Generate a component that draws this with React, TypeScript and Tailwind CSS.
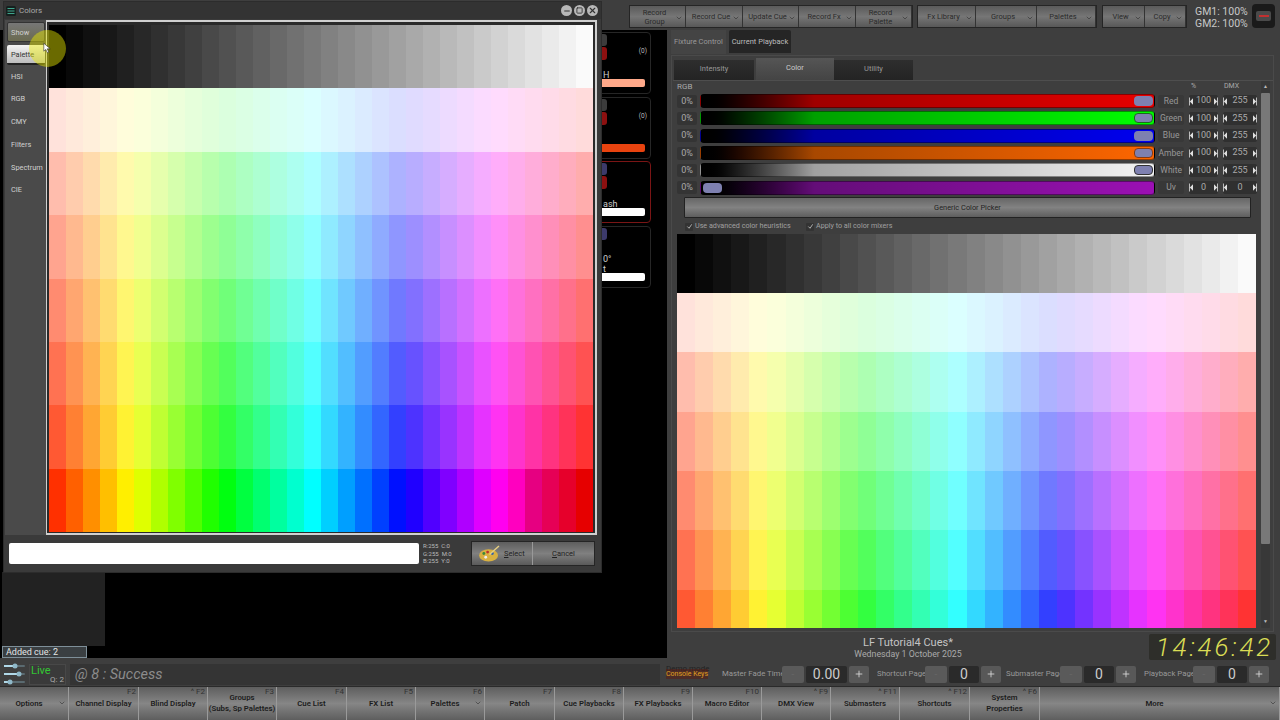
import { ChevronDown, Minus, Square, X, Plus } from 'lucide-react';

// 32 hue columns, lightness per row (top row is the grey ramp)
const COLS = Array.from({ length: 32 }, (_, i) => i);
const LIGHTNESS = [93, 84, 78, 72, 66, 60, 50];

function Palette({ rowClass }: { rowClass: string }) {
  return (
    <div className="flex flex-col w-full h-full overflow-hidden">
      <div className={`flex shrink-0 ${rowClass}`}>
        {COLS.map((i) => (
          <div key={i} className="flex-1" style={{ backgroundColor: `hsl(0 0% ${(i / 31) * 98}%)` }} />
        ))}
      </div>
      {LIGHTNESS.map((l) => (
        <div key={l} className={`flex shrink-0 ${rowClass}`}>
          {COLS.map((i) => (
            <div
              key={i}
              className="flex-1"
              style={{ backgroundColor: `hsl(${(i + 1) * 11.25} 100% ${l === 50 && i >= 28 ? 45 : l}%)` }}
            />
          ))}
        </div>
      ))}
    </div>
  );
}

function ToolButton({ label, className }: { label: string[]; className: string }) {
  return (
    <div className={`relative h-full flex flex-col items-center justify-center pr-1.5 leading-[9px] text-[7.5px] text-[#2a2a2a] border-r border-[#333] bg-linear-to-b from-[#5a5a5a] via-[#767676] to-[#585858] ${className}`}>
      {label.map((t) => (
        <span key={t} className="whitespace-nowrap">{t}</span>
      ))}
      <ChevronDown className="absolute right-0.5 top-[8px] w-2 h-2 text-[#222]" strokeWidth={1.5} />
    </div>
  );
}

function Toolbar() {
  return (
    <div className="h-[30px] flex justify-end items-start pt-[5px] pr-[5px] bg-[#3e3e3e]">
      <div className="flex h-[23px] border border-[#252525]">
        <ToolButton label={['Record', 'Group']} className="w-[56px]" />
        <ToolButton label={['Record Cue']} className="w-[57px]" />
        <ToolButton label={['Update Cue']} className="w-[56px]" />
        <ToolButton label={['Record  Fx']} className="w-[57px]" />
        <ToolButton label={['Record', 'Palette']} className="w-[56px]" />
      </div>
      <div className="flex h-[23px] border border-[#252525] ml-[4px]">
        <ToolButton label={['Fx Library']} className="w-[58px]" />
        <ToolButton label={['Groups']} className="w-[61px]" />
        <ToolButton label={['Palettes']} className="w-[59px]" />
      </div>
      <div className="flex h-[23px] border border-[#252525] ml-[5px]">
        <ToolButton label={['View']} className="w-[42px]" />
        <ToolButton label={['Copy']} className="w-[41px]" />
      </div>
      <div className="ml-[8px] mt-[1px] w-[56px] text-[10.5px] leading-[12px] text-[#c8c8c8] whitespace-nowrap">
        <div>GM1: 100%</div>
        <div>GM2: 100%</div>
      </div>
      <div className="ml-[1px] -mt-[1px] w-[23px] h-[24px] rounded-[4px] bg-[#1a1a1a] flex items-center justify-center">
        <div className="w-[15px] h-[10px] rounded-[2px] bg-[#4a4a4a] flex items-center justify-center">
          <div className="w-[10px] h-[2px] bg-[#c23030]" />
        </div>
      </div>
    </div>
  );
}

function CueCard({ bar, red, tag, note, count, noBadge }: { bar: string; red?: boolean; tag: string; note?: string; count?: boolean; noBadge?: boolean }) {
  return (
    <div className={`relative h-[62px] w-[60px] rounded-[4px] border ${red ? 'border-[#7a1515]' : 'border-[#262626]'} bg-black`}>
      <div className={`absolute left-0 top-[1px] w-[15px] h-[12px] rounded-r-[3px] ${tag}`} />
      {!noBadge && <div className="absolute left-0 top-[14px] w-[15px] h-[13px] rounded-r-[3px] bg-[#8c1010]" />}
      {note && (
        <div className="absolute left-[11px] top-[27px] text-[9px] leading-[10px] text-[#cfcfcf] whitespace-pre">{note}</div>
      )}
      {count && <div className="absolute right-[3px] top-[14px] text-[6.5px] text-[#bbb]">(0)</div>}
      <div className={`absolute left-0 right-[5px] top-[46px] h-[8px] rounded-r-[2px] ${bar}`} />
    </div>
  );
}

function LeftColumn() {
  return (
    <div className="w-[667px] h-full bg-black flex flex-col">
      <div className="flex flex-col items-end gap-[2.67px] pt-[2px] pr-[16px]">
        <CueCard bar="bg-[#ffa98a]" tag="bg-[#3c3c3c]" note={'\nH'} count />
        <CueCard bar="bg-[#e8430f]" tag="bg-[#3c3c3c]" count />
        <CueCard bar="bg-white" tag="bg-[#3c3a6a]" red note={'\nash'} />
        <CueCard bar="bg-white" tag="bg-[#3c3a6a]" noBadge note={'0°\nt'} />
      </div>
      <div className="mt-auto w-[105px] pl-[2px]">
        <div className="h-[74px] bg-[#222222]" />
        <div className="h-[12px] w-[85px] bg-[#3a3f42] border border-[#7e8f99] text-[9px] leading-[10px] pl-[3px] text-[#e4e4e4]">Added cue: 2</div>
      </div>
    </div>
  );
}

const SLIDERS = [
  { name: 'Red', pct: '100', dmx: '255', bar: 'from-black via-[#a00000] via-25% to-[#e80000]', outline: 'border-transparent' },
  { name: 'Green', pct: '100', dmx: '255', bar: 'from-black via-[#00a000] via-25% to-[#00ff00]', outline: 'border-[#1a6a1a]' },
  { name: 'Blue', pct: '100', dmx: '255', bar: 'from-black via-[#0000a0] via-25% to-[#0000f0]', outline: 'border-transparent' },
  { name: 'Amber', pct: '100', dmx: '255', bar: 'from-black via-[#a84800] via-25% to-[#ff6600]', outline: 'border-[#8a3a10]' },
  { name: 'White', pct: '100', dmx: '255', bar: 'from-black via-[#a0a0a0] via-25% to-[#f4f4f4]', outline: 'border-[#333]' },
  { name: 'Uv', pct: '0', dmx: '0', bar: 'from-black via-[#640d78] via-25% to-[#9b10b4]', outline: 'border-transparent' },
];

function Spin({ value, className }: { value: string; className: string }) {
  return (
    <div className={`h-[13px] flex items-center justify-between rounded-[2px] bg-[#303030] ${className}`}>
      <svg viewBox="0 0 5 10" className="w-[4px] h-[9px]"><path d="M0 0h1v10H0zM5 1v8L1 5z" fill="#e0e0e0" /></svg>
      <span className="text-[9px] text-[#aaa]">{value}</span>
      <svg viewBox="0 0 5 10" className="w-[4px] h-[9px]"><path d="M5 0H4v10h1zM0 1v8l4-4z" fill="#e0e0e0" /></svg>
    </div>
  );
}

function SliderRow({ s }: { s: (typeof SLIDERS)[number] }) {
  const atZero = s.pct === '0';
  return (
    <div className="flex items-center h-[17.3px]">
      <div className="w-[20px] h-[13px] bg-[#343434] rounded-[2px] text-[9px] leading-[13px] text-center text-[#aaa]">0%</div>
      <div className={`ml-[3px] w-[456px] h-[14px] rounded-[4px] border border-black/40 flex items-center ${atZero ? 'justify-start pl-[2px]' : 'justify-end pr-[1px]'} bg-linear-to-r ${s.bar}`}>
        <div className={`w-[19px] h-[10px] rounded-[4px] bg-[#7e80b0] border ${s.outline}`} />
      </div>
      <div className="ml-[3px] w-[26px] h-[13px] bg-[#383838] rounded-[2px] text-[8.5px] leading-[13px] text-center text-[#999]">{s.name}</div>
      <Spin value={s.pct} className="ml-[5px] w-[29px]" />
      <Spin value={s.dmx} className="ml-[5px] w-[34px]" />
    </div>
  );
}

function Check({ label, className }: { label: string; className?: string }) {
  return (
    <div className={`flex items-center gap-[2px] ${className ?? ''}`}>
      <div className="w-[8px] h-[8px] bg-[#333] rounded-[1px] flex items-center justify-center">
        <svg viewBox="0 0 8 8" className="w-[7px] h-[7px]"><path d="M1.5 4l2 2 3-4.5" fill="none" stroke="#bbb" strokeWidth="1" /></svg>
      </div>
      <span className="text-[7.2px] text-[#a0a0a0] whitespace-nowrap">{label}</span>
    </div>
  );
}

function RightColumn() {
  return (
    <div className="flex-1 flex flex-col pl-[4px] pr-[6px]">
      <div className="flex h-[25px] items-start text-[7.5px] gap-[3px]">
        <div className="w-[55px] h-[24px] bg-[#444] flex items-center justify-center text-[#999] whitespace-nowrap">Fixture Control</div>
        <div className="w-[62px] h-[23px] bg-[#252525] rounded-t-[2px] flex items-center justify-center text-[#bcbcbc] whitespace-nowrap">Current Playback</div>
      </div>
      <div className="h-[577px] border border-[#4a4a4a] pt-[2px] pl-[1px] flex flex-col">
        <div className="flex h-[22px] text-[7.5px] items-end">
          <div className="w-[80px] h-[20px] ml-[1px] pb-[2px] bg-linear-to-b from-[#2e2e2e] to-[#242424] flex items-center justify-center text-[#999]">Intensity</div>
          <div className="w-[78px] h-[22px] ml-[2px] pb-[3px] bg-linear-to-b from-[#555] to-[#444] flex items-center justify-center text-[#ccc]">Color</div>
          <div className="w-[79px] h-[20px] pb-[2px] bg-linear-to-b from-[#2e2e2e] to-[#242424] flex items-center justify-center text-[#999]">Utility</div>
        </div>
        <div className="flex-1 flex min-h-0 border-t border-[#4e4e4e] pl-[4px] pb-[3px]">
          <div className="w-[580px] flex flex-col min-h-0">
            <div className="h-[11.5px] shrink-0 relative text-[8px] leading-[11px] text-[#aaa]">
              RGB
              <span className="absolute left-[514px] top-0 text-[7px]">%</span>
              <span className="absolute left-[547px] top-0 text-[7px]">DMX</span>
            </div>
            {SLIDERS.map((s) => (
              <SliderRow key={s.name} s={s} />
            ))}
            <div className="ml-[7px] mt-[1px] w-[567px] shrink-0 h-[21px] rounded-[1px] border border-[#222] bg-linear-to-b from-[#666] via-[#828282] to-[#5e5e5e] flex items-center justify-center text-[7.4px] text-[#222]">
              Generic Color Picker
            </div>
            <div className="flex shrink-0 h-[14.5px] items-center mt-[1px]">
              <Check label="Use advanced color heuristics" className="ml-[8px] w-[121px]" />
              <Check label="Apply to all color mixers" />
            </div>
            <div className="flex-1 w-[579px] min-h-0">
              <Palette rowClass="h-[59.3px]" />
            </div>
          </div>
          <div className="ml-[4px] w-[9px] flex flex-col bg-[#383838] rounded-[1px]">
            <div className="h-[12px] flex items-center justify-center text-[5px] text-[#bbb]">▲</div>
            <div className="h-[451px] bg-[#787878] rounded-[1px]" />
            <div className="mt-auto h-[12px] flex items-center justify-center text-[5px] text-[#bbb]">▼</div>
          </div>
        </div>
      </div>
      <div className="flex-1 flex">
        <div className="flex-1 flex flex-col items-center pt-[4px] -ml-[4px]">
          <div className="text-[11px] leading-[13px] text-[#c4c4c4]">LF Tutorial4 Cues*</div>
          <div className="text-[8.8px] leading-[11px] text-[#aaa]">Wednesday 1 October  2025</div>
        </div>
        <div className="w-[127px] h-[26px] mt-[2px] bg-[#2e2e2a] rounded-[2px] -mr-[2px] flex items-center justify-end pr-[3px]">
          <span className="text-[26px] leading-[26px] font-light italic tracking-[2.8px] text-[#dadd55] whitespace-nowrap">14:46:42</span>
        </div>
      </div>
    </div>
  );
}

function PageControl({ label, value, labelW, valueW, ml }: { label: string; value: string; labelW: string; valueW: string; ml: string }) {
  return (
    <div className={`flex items-center h-[18px] ${ml}`}>
      <span className={`text-[7.8px] text-[#999] whitespace-nowrap ${labelW}`}>{label}</span>
      <div className="w-[22px] h-[17px] rounded-[2px] bg-[#5a5a5a] text-[#666] text-center text-[10px] leading-[17px]">-</div>
      <div className={`h-[17px] ml-[2px] bg-[#2a2a2a] rounded-[2px] text-center text-[14px] leading-[17px] text-[#ccc] ${valueW}`}>{value}</div>
      <div className="w-[20px] h-[17px] ml-[2px] rounded-[2px] bg-[#585858] flex items-center justify-center">
        <Plus className="w-[10px] h-[10px] text-[#ddd]" strokeWidth={2} />
      </div>
    </div>
  );
}

function StatusRow() {
  return (
    <div className="h-[26px] flex items-center bg-[#3e3e3e] pt-[2px]">
      <div className="ml-[4px] w-[21px] flex flex-col gap-[2px]">
        <svg viewBox="0 0 21 6" className="w-[21px] h-[6px]"><rect y="2" width="21" height="2" rx="1" fill="#5a6a70" /><rect y="2" width="10" height="2" fill="#b0d8e8" /><circle cx="11" cy="3" r="2.5" fill="#8fb8c8" /></svg>
        <svg viewBox="0 0 21 6" className="w-[21px] h-[6px]"><rect y="2" width="21" height="2" rx="1" fill="#5a6a70" /><rect y="2" width="14" height="2" fill="#b0d8e8" /><circle cx="15" cy="3" r="2.5" fill="#8fb8c8" /></svg>
        <svg viewBox="0 0 21 6" className="w-[21px] h-[6px]"><rect y="2" width="21" height="2" rx="1" fill="#5a6a70" /><rect y="2" width="4" height="2" fill="#b0d8e8" /><circle cx="6" cy="3" r="2.5" fill="#8fb8c8" /></svg>
      </div>
      <div className="relative ml-[4px] w-[37px] h-[21px] bg-[#3a3a3a] border border-[#484848]">
        <span className="absolute left-[1px] top-[-2px] text-[11px] text-[#33c733]">Live</span>
        <span className="absolute right-[1px] bottom-[-2px] text-[8px] text-[#aaa]">Q: 2</span>
      </div>
      <div className="ml-[4px] w-[590px] h-[21px] bg-[#343434] pl-[5px] italic text-[14.5px] leading-[21px] text-[#8c8c8c]">@ 8 : Success</div>
      <div className="relative ml-[6px] w-[42px] h-[14px] flex items-center justify-center">
        <span className="absolute -top-[4px] left-0 text-[8px] text-[#222] whitespace-nowrap">Demo mode</span>
        <span className="relative text-[7px] text-[#e0a020] whitespace-nowrap bg-[#5a1a10]/50">Console Keys</span>
      </div>
      <PageControl label="Master Fade Time" value="0.00" labelW="w-[60px]" valueW="w-[41px]" ml="ml-[14px]" />
      <PageControl label="Shortcut Page" value="0" labelW="w-[48px]" valueW="w-[30px]" ml="ml-[8px]" />
      <PageControl label="Submaster Page" value="0" labelW="w-[54px]" valueW="w-[30px]" ml="ml-[5px]" />
      <PageControl label="Playback Page" value="0" labelW="w-[49px]" valueW="w-[30px]" ml="ml-[8px]" />
    </div>
  );
}

const FKEYS = [
  { w: 'w-[69px]', label: ['Options'], menu: true },
  { w: 'w-[70px]', label: ['Channel Display'], key: 'F2' },
  { w: 'w-[69px]', label: ['Blind Display'], key: '^ F2' },
  { w: 'w-[69px]', label: ['Groups', '(Subs, Sp Palettes)'], key: 'F3' },
  { w: 'w-[70px]', label: ['Cue List'], key: 'F4' },
  { w: 'w-[69px]', label: ['FX List'], key: 'F5' },
  { w: 'w-[69px]', label: ['Palettes'], key: 'F6', menu: true },
  { w: 'w-[70px]', label: ['Patch'], key: 'F7' },
  { w: 'w-[69px]', label: ['Cue Playbacks'], key: 'F8' },
  { w: 'w-[69px]', label: ['FX Playbacks'], key: 'F9' },
  { w: 'w-[69px]', label: ['Macro Editor'], key: 'F10' },
  { w: 'w-[69px]', label: ['DMX View'], key: '^ F9' },
  { w: 'w-[69px]', label: ['Submasters'], key: '^ F11' },
  { w: 'w-[70px]', label: ['Shortcuts'], key: '^ F12' },
  { w: 'w-[70px]', label: ['System', 'Properties'], key: '^ F6' },
  { w: 'flex-1', label: ['More'], menu: true },
];

function FunctionBar() {
  return (
    <div className="flex-1 flex border-t border-[#2a2a2a]">
      {FKEYS.map((f) => (
        <div key={f.label[0]} className={`relative h-full flex flex-col items-center justify-center pb-[1px] border-r border-[#9a9a9a] text-[7.8px] leading-[11px] font-semibold text-[#1c1c1c] bg-linear-to-b from-[#5e5e5e] via-[#868686] to-[#5e5e5e] ${f.menu ? 'pr-[10px]' : ''} ${f.w}`}>
          {f.label.map((t) => (
            <span key={t} className="whitespace-nowrap">{t}</span>
          ))}
          {f.key && <span className="absolute right-[2px] top-0 text-[8px] leading-[10px] font-normal text-[#333]">{f.key}</span>}
          {f.menu && <ChevronDown className="absolute right-[2px] top-[12px] w-2 h-2 text-[#222]" strokeWidth={1.5} />}
        </div>
      ))}
    </div>
  );
}

function ColorsDialog() {
  const tabs = ['HSI', 'RGB', 'CMY', 'Filters', 'Spectrum', 'CIE'];
  return (
    <div className="absolute left-[3px] top-[1px] w-[599px] h-[572px] bg-[#3a3a3a] border border-[#2c2c2c] flex flex-col">
      <div className="h-[17px] flex items-center bg-[#333] pl-[2px] pr-[3px]">
        <svg viewBox="0 0 10 10" className="w-[10px] h-[10px]">
          <rect width="10" height="10" rx="1.5" fill="#15201e" />
          <path d="M1.5 2.5h7M1.5 5h7M1.5 7.5h7" stroke="#3fa58c" strokeWidth="1" />
        </svg>
        <span className="ml-[3px] text-[8px] text-[#aaa]">Colors</span>
        <div className="ml-auto flex gap-[2px] text-[#333]">
          <div className="w-[11px] h-[11px] rounded-full bg-[#b8b8b8] flex items-center justify-center"><Minus className="w-[8px] h-[8px]" strokeWidth={3} /></div>
          <div className="w-[11px] h-[11px] rounded-full bg-[#b8b8b8] flex items-center justify-center"><Square className="w-[7px] h-[7px]" strokeWidth={3} /></div>
          <div className="w-[11px] h-[11px] rounded-full bg-[#b8b8b8] flex items-center justify-center"><X className="w-[9px] h-[9px]" strokeWidth={3} /></div>
        </div>
      </div>
      <div className="flex-1 flex min-h-0 pl-[1px]">
        <div className="w-[41px] mt-[1px] pt-[2px] bg-[#4a4a4a] text-[7.4px] text-[#d0d0d0] flex flex-col">
          <div className="h-[20px] w-[38px] ml-[2px] pt-[1px] rounded-[2px] border border-[#333] bg-linear-to-b from-[#777] to-[#6a6a50] flex items-center pl-[3px]">Show</div>
          <div className="h-[20px] w-[38px] ml-[2px] mt-[3px] pt-[2px] rounded-[2px] border-b-2 border-[#222] bg-linear-to-b from-[#f4f4f4] to-[#bcbcbc] flex items-center pl-[4px] text-[#333]">Palette</div>
          {tabs.map((t) => (
            <div key={t} className="h-[22.7px] flex items-center pl-[6px] first:mt-[2px] whitespace-nowrap">{t}</div>
          ))}
        </div>
        <div className="w-[551px] h-[515px] mt-[1px] border-t-2 border-r-2 border-b-2 border-l border-[#d0d0d0] bg-[#2a2a2a] pt-[3px] pl-[2px] pr-[2px] pb-[1px]">
          <Palette rowClass="h-[63.4px]" />
        </div>
      </div>
      <div className="h-[37px] flex items-center pl-[5px]">
        <div className="w-[410px] h-[21px] bg-white rounded-[2px]" />
        <div className="ml-[4px] w-[36px] text-[6px] leading-[7.5px] text-[#bbb] whitespace-pre">{'R:255  C:0\nG:255  M:0\nB:255  Y:0'}</div>
        <div className="ml-[12px] flex h-[25px] border border-[#252525]">
          <div className="w-[61px] h-full flex items-center border-r border-[#999] bg-linear-to-b from-[#5e5e5e] via-[#808080] to-[#5a5a5a] pl-[7px] text-[7.5px] text-[#222]">
            <svg viewBox="0 0 22 18" className="w-[21px] h-[17px]">
              <ellipse cx="10" cy="11" rx="10" ry="6.5" fill="#d8b040" />
              <circle cx="5" cy="9" r="1.5" fill="#3a8a3a" />
              <circle cx="9" cy="7.5" r="1.5" fill="#c03030" />
              <circle cx="14" cy="9" r="1.5" fill="#3060b0" />
              <circle cx="7" cy="13" r="1.5" fill="#eee" />
              <path d="M11 10L21 1" stroke="#e8d080" strokeWidth="1.5" />
            </svg>
            <span className="ml-[4px]"><u>S</u>elect</span>
          </div>
          <div className="w-[61px] h-full flex items-center justify-center bg-linear-to-b from-[#5e5e5e] via-[#808080] to-[#5a5a5a] text-[7.5px] text-[#222]">
            <span><u>C</u>ancel</span>
          </div>
        </div>
      </div>
    </div>
  );
}

export default function App() {
  return (
    <div className="relative w-[1280px] h-[720px] overflow-hidden flex flex-col bg-[#3e3e3e] font-['Roboto','Liberation_Sans',sans-serif]">
      <Toolbar />
      <div className="h-[630px] flex">
        <div className="h-[628px]">
          <LeftColumn />
        </div>
        <RightColumn />
      </div>
      <StatusRow />
      <FunctionBar />
      <ColorsDialog />
      {/* presenter cursor highlight */}
      <div className="absolute left-[29px] top-[30px] w-[37px] h-[37px] rounded-full bg-[rgba(235,235,0,0.45)]" />
      <svg viewBox="0 0 10 14" className="absolute left-[43px] top-[42px] w-[8px] h-[12px]">
        <path d="M1 1v10l2.5-2.2L5.5 13l1.8-.8L5.3 8H9z" fill="#fff" stroke="#222" strokeWidth="0.7" />
      </svg>
    </div>
  );
}
